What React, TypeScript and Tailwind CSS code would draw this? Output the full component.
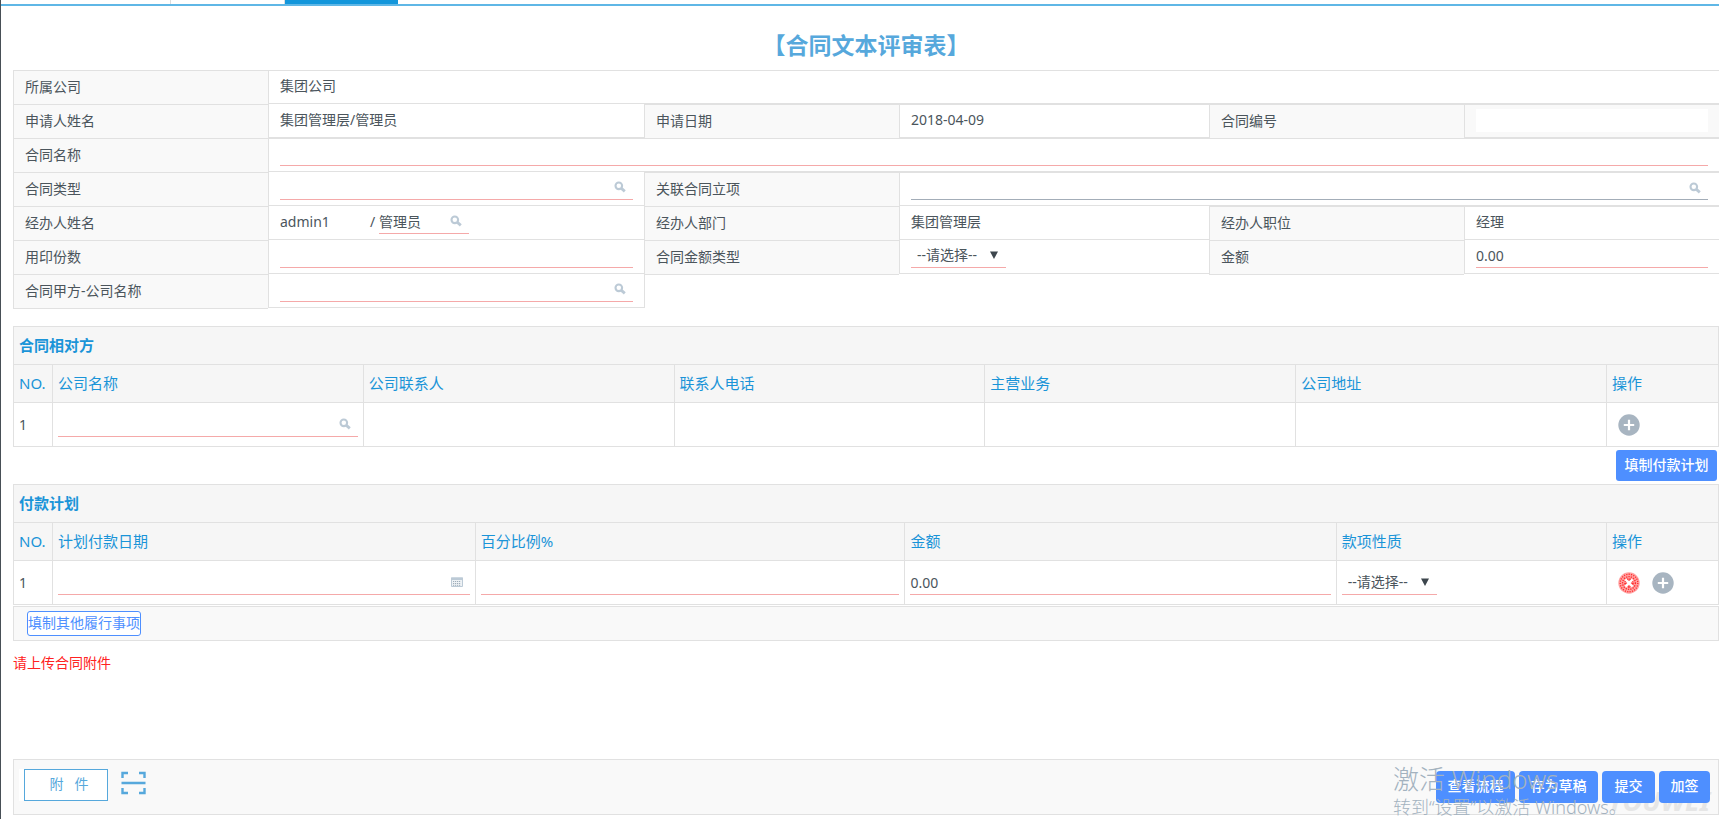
import React from 'react';

const line = 'border-[#e1e1e1]';
const required = 'border-b border-[#f5a9a9]';

function SearchIcon() {
  return (
    <svg viewBox="0 0 12 12" className="h-3 w-3" fill="none" stroke="#bccad6" aria-hidden="true">
      <circle cx="4.8" cy="4.8" r="3.3" strokeWidth="2.1" />
      <path d="M7.4 7.4 10.8 10.4" strokeWidth="2.8" />
    </svg>
  );
}

function CalendarIcon() {
  return (
    <svg viewBox="0 0 12 10" className="h-[10px] w-3" aria-hidden="true">
      <path d="M.5 1h11v8.5H.5z" fill="#eef2f5" stroke="#bccad6" />
      <path d="M0 .5h12v2.5H0z" fill="#bccad6" />
      <path d="M2 4.5h8M2 6.5h8M2 8.3h8" stroke="#9fadb9" strokeDasharray="1.2 .8" />
    </svg>
  );
}

function RoundButton({ kind, label }: { kind: 'add' | 'remove'; label: string }) {
  return (
    <button type="button" aria-label={label} className="h-[22px] w-[22px]">
      <svg viewBox="0 0 22 22" className="h-[22px] w-[22px]">
        <circle cx="11" cy="11" r="10.7" fill={kind === 'add' ? '#a8b5c1' : '#ffa3a3'} />
        {kind === 'remove' && (
          <g fill="none" stroke="#ff2f2f">
            <circle cx="11" cy="11" r="8.8" strokeWidth="1.4" strokeDasharray="1.2 1.2" />
            <circle cx="11" cy="11" r="6.4" strokeWidth="1.4" strokeDasharray="1.3 1.1" />
            <circle cx="11" cy="11" r="3.6" strokeWidth="2.4" strokeDasharray="1.6 .8" />
          </g>
        )}
        <path
          d={kind === 'add' ? 'M11 5.8v10.4M5.8 11h10.4' : 'M7.4 7.4l7.2 7.2M14.6 7.4l-7.2 7.2'}
          stroke="#fff"
          strokeWidth="2.2"
        />
      </svg>
    </button>
  );
}

function Label({ children, htmlFor }: { children: React.ReactNode; htmlFor?: string }) {
  return (
    <label
      htmlFor={htmlFor}
      className={`-mb-px flex h-[35px] items-center border-y border-l bg-[#f9f9f9] pb-[2px] pl-[11px] ${line}`}
    >
      {children}
    </label>
  );
}

function Value({
  children,
  className = '',
}: {
  children?: React.ReactNode;
  className?: string;
}) {
  return (
    <div className={`flex h-[34px] items-center border-b border-l px-[11px] pb-[2px] ${line} ${className}`}>
      {children}
    </div>
  );
}

function Field({
  id,
  label,
  value = '',
  icon,
  tone = required,
}: {
  id: string;
  label?: string;
  value?: string;
  icon?: React.ReactNode;
  tone?: string;
}) {
  return (
    <div className={`flex h-6 w-full items-center ${tone}`}>
      <input
        id={id}
        aria-label={label}
        defaultValue={value}
        className="h-full min-w-0 flex-1 bg-transparent outline-none"
      />
      {icon && (
        <button type="button" aria-label="选择" className="mr-[7px]">
          {icon}
        </button>
      )}
    </div>
  );
}

function Select({ id, label }: { id: string; label?: string }) {
  return (
    <div className={`relative flex h-6 w-[95px] items-center ${required}`}>
      <select id={id} aria-label={label} className="h-full w-full appearance-none bg-transparent pl-[6px] outline-none">
        <option>--请选择--</option>
      </select>
      <svg viewBox="0 0 8 8" className="pointer-events-none absolute right-2 h-2 w-2" aria-hidden="true">
        <path d="M0 .5h8L4 8z" fill="#3d464d" />
      </svg>
    </div>
  );
}

const head = 'border border-[#e1e1e1] px-[5px] pb-[2px] text-left font-normal';
const cell = 'border border-[#e1e1e1] px-[5px] text-left';

function GridTable({
  title,
  columns,
  widths,
  children,
}: {
  title: string;
  columns: string[];
  widths: string[];
  children: React.ReactNode;
}) {
  return (
    <table className="w-full table-fixed border-collapse">
      <colgroup>
        {widths.map((w, i) => (
          <col key={i} className={w} />
        ))}
      </colgroup>
      <thead className="bg-[#f6f6f6] text-[15px] text-[#1a94d8]">
        <tr className="h-[38px]">
          <th colSpan={columns.length} className="border border-[#e1e1e1] px-[5px] pb-[2px] text-left font-bold">
            {title}
          </th>
        </tr>
        <tr className="h-[38px]">
          {columns.map((c) => (
            <th key={c} className={head}>
              {c}
            </th>
          ))}
        </tr>
      </thead>
      <tbody>
        <tr className="h-11">{children}</tr>
      </tbody>
    </table>
  );
}

const blueButton = 'relative h-8 rounded-[4px] bg-[#4e8fff] pb-[2px] font-medium text-white';

export default function App() {
  return (
    <div className="flex min-h-screen flex-col border-l border-[#474f56] bg-white font-['Noto_Sans','Noto_Sans_CJK_SC',sans-serif] text-[14px] leading-5 text-[#4b555c]">
      <nav className="flex h-[6px] border-b-2 border-[#5fb7e6]">
        <div className="w-[170px] border-r border-[#dcdcdc]" />
        <div className="w-[114px] border-r border-[#dcdcdc]" />
        <div className="w-[113px] bg-[#1296db]" />
      </nav>

      <main className="flex flex-1 flex-col pl-3">
        <h1 className="flex h-16 items-center justify-center pt-[14px] text-[23px] font-bold text-[#56a8dc]">
          【合同文本评审表】
        </h1>

        <form className="grid auto-rows-[34px] grid-cols-[255fr_376fr_255fr_310fr_255fr_255fr] items-start">
          <Label>所属公司</Label>
          <Value className="col-span-5 border-t">集团公司</Value>

          <Label>申请人姓名</Label>
          <Value>集团管理层/管理员</Value>
          <Label>申请日期</Label>
          <Value className="border-t">2018-04-09</Value>
          <Label htmlFor="no">合同编号</Label>
          <Value className="border-t bg-[#f9f9f9]">
            <input id="no" className="h-[23px] w-full min-w-0 bg-white outline-none" />
          </Value>

          <Label htmlFor="name">合同名称</Label>
          <Value className="col-span-5 border-t">
            <Field id="name" />
          </Value>

          <Label htmlFor="type">合同类型</Label>
          <Value>
            <Field id="type" icon={<SearchIcon />} />
          </Value>
          <Label htmlFor="project">关联合同立项</Label>
          <Value className="col-span-3 border-t">
            <Field id="project" icon={<SearchIcon />} tone="border-b border-[#a3adb8]" />
          </Value>

          <Label htmlFor="agent">经办人姓名</Label>
          <Value>
            <span className="w-[90px]">admin1</span>
            <span className="w-[9px]">/</span>
            <div className="w-[90px]">
              <Field id="agent" value="管理员" icon={<SearchIcon />} />
            </div>
          </Value>
          <Label>经办人部门</Label>
          <Value>集团管理层</Value>
          <Label>经办人职位</Label>
          <Value className="border-t">经理</Value>

          <Label htmlFor="copies">用印份数</Label>
          <Value>
            <Field id="copies" />
          </Value>
          <Label htmlFor="amountType">合同金额类型</Label>
          <Value>
            <Select id="amountType" />
          </Value>
          <Label htmlFor="amount">金额</Label>
          <Value>
            <Field id="amount" value="0.00" />
          </Value>

          <Label htmlFor="partyA">合同甲方-公司名称</Label>
          <Value className="-mr-px border-r">
            <Field id="partyA" icon={<SearchIcon />} />
          </Value>
        </form>

        <section className="mt-[18px]">
          <GridTable
            title="合同相对方"
            columns={['NO.', '公司名称', '公司联系人', '联系人电话', '主营业务', '公司地址', '操作']}
            widths={['w-[39px]', '', '', '', '', '', 'w-[112px]']}
          >
            <td className={cell}>1</td>
            <td className={cell}>
              <Field id="company" label="公司名称" icon={<SearchIcon />} />
            </td>
            <td className={cell} />
            <td className={cell} />
            <td className={cell} />
            <td className={cell} />
            <td className={cell}>
              <div className="flex pl-[6px]">
                <RoundButton kind="add" label="新增相对方" />
              </div>
            </td>
          </GridTable>
        </section>

        <div className="flex justify-end py-[3px] pr-[2px]">
          <button
            type="button"
            className="h-[31px] w-[101px] rounded-[3px] bg-[#4e8fff] pb-[2px] font-medium text-white"
          >
            填制付款计划
          </button>
        </div>

        <section>
          <GridTable
            title="付款计划"
            columns={['NO.', '计划付款日期', '百分比例%', '金额', '款项性质', '操作']}
            widths={['w-[39px]', 'w-[24.8%]', 'w-[25.2%]', 'w-[25.3%]', '', 'w-[112px]']}
          >
            <td className={cell}>1</td>
            <td className={cell}>
              <Field id="payDate" label="计划付款日期" icon={<CalendarIcon />} />
            </td>
            <td className={cell}>
              <Field id="percent" label="百分比例" />
            </td>
            <td className={cell}>
              <Field id="payAmount" label="金额" value="0.00" />
            </td>
            <td className={cell}>
              <Select id="payType" label="款项性质" />
            </td>
            <td className={cell}>
              <div className="flex gap-3 pl-[6px]">
                <RoundButton kind="remove" label="删除计划" />
                <RoundButton kind="add" label="新增计划" />
              </div>
            </td>
          </GridTable>
        </section>

        <div className={`mt-px flex h-[35px] items-center border bg-[#f9f9f9] pl-[13px] ${line}`}>
          <button
            type="button"
            className="h-[25px] rounded-[3px] border border-[#4e8fff] bg-white pb-[2px] text-[#4e8fff]"
          >
            填制其他履行事项
          </button>
        </div>

        <p className="mt-3 text-[#ff2222]">请上传合同附件</p>

        <footer className={`relative mt-auto mb-1 flex h-14 items-start border bg-[#f9f9f9] ${line}`}>
          <div className="ml-[5px] mt-[9px] bg-white pl-[5px]">
            <button
              type="button"
              className="h-8 w-[84px] border border-[#56a8dc] bg-white pb-[2px] pl-[6px] text-[#56a8dc]"
            >
              附&nbsp;&nbsp;&nbsp;件
            </button>
          </div>
          <button type="button" aria-label="扫描" className="ml-[13px] mt-[11px]">
            <svg viewBox="0 0 25 24" className="h-6 w-[25px]" fill="none" stroke="#56a8dc" strokeWidth="2.4">
              <path d="M1.5 7V2h5.5M18 2h5.5v5M1.5 17v5h5.5M18 22h5.5v-5M.5 12h24" />
            </svg>
          </button>
          <span className="pointer-events-none absolute -bottom-px right-2 text-[27px] font-bold italic leading-7 text-[#e6e6e6]">
            YOUWEI
          </span>
          <div className="ml-auto mr-2 mt-[11px] flex gap-1">
            <button type="button" className={`${blueButton} w-[79px]`}>查看流程</button>
            <button type="button" className={`${blueButton} w-[79px]`}>存为草稿</button>
            <button type="button" className={`${blueButton} w-[53px]`}>提交</button>
            <button type="button" className={`${blueButton} w-[51px]`}>加签</button>
          </div>
          <div className="pointer-events-none absolute right-[91px] top-[3px] w-[234px] whitespace-nowrap font-light text-[#a3b2bf]">
            <p className="text-[26px] leading-8">激活 Windows</p>
            <p className="text-[18px] leading-6">转到“设置”以激活 Windows。</p>
          </div>
        </footer>
      </main>
    </div>
  );
}
